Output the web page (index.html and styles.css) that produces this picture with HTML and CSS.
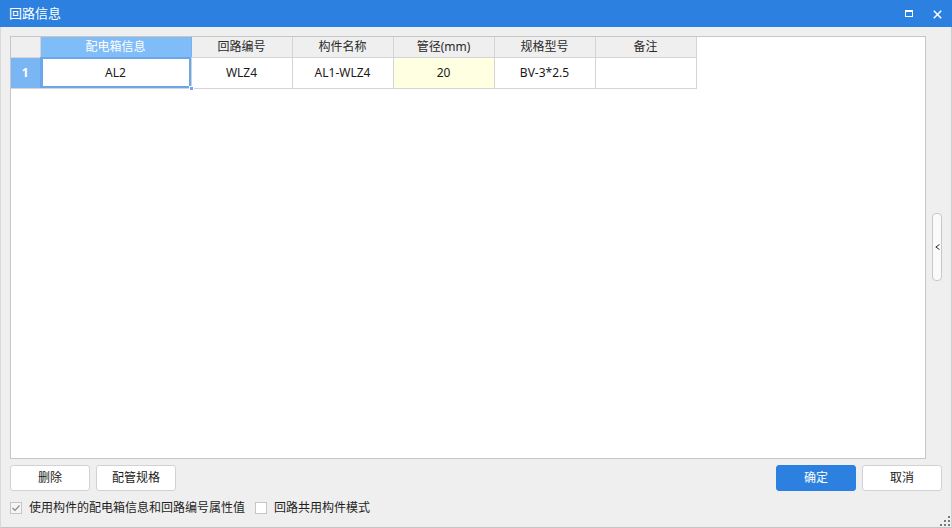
FILE: index.html
```html
<!DOCTYPE html>
<html lang="zh">
<head>
<meta charset="utf-8">
<title>回路信息</title>
<link rel="stylesheet" href="styles.css">
</head>
<body>
<div class="window">
  <div class="titlebar">
    <span class="title">回路信息</span>
    <div class="controls">
      <svg class="ctl" width="8" height="7" viewBox="0 0 8 7"><rect x="0.5" y="0.5" width="7" height="6" fill="none" stroke="#fff" stroke-width="1"/><rect x="0" y="0" width="8" height="2" fill="#fff"/></svg>
      <svg class="ctl close" width="9" height="9" viewBox="0 0 9 9"><path d="M0.8 0.8 L8.2 8.2 M8.2 0.8 L0.8 8.2" stroke="#fff" stroke-width="1.5"/></svg>
    </div>
  </div>
  <div class="content">
    <div class="main-row">
      <div class="panel">
        <table class="grid">
          <colgroup>
            <col class="c-num"><col class="c-wide"><col class="c-std"><col class="c-std"><col class="c-std"><col class="c-std"><col class="c-std">
          </colgroup>
          <thead>
            <tr>
              <th class="corner"></th>
              <th class="sel-head">配电箱信息</th>
              <th>回路编号</th>
              <th>构件名称</th>
              <th>管径(mm)</th>
              <th>规格型号</th>
              <th>备注</th>
            </tr>
          </thead>
          <tbody>
            <tr>
              <td class="rownum">1</td>
              <td class="active">AL2<span class="handle"></span></td>
              <td>WLZ4</td>
              <td>AL1-WLZ4</td>
              <td class="pipe">20</td>
              <td>BV-3*2.5</td>
              <td></td>
            </tr>
          </tbody>
        </table>
      </div>
      <div class="side">
        <div class="tab">
          <svg width="5" height="6" viewBox="0 0 5 6"><path d="M4.5 0.5 L0.8 3 L4.5 5.5" fill="none" stroke="#333" stroke-width="1"/></svg>
        </div>
      </div>
    </div>
    <div class="buttons">
      <div class="left-btns">
        <button class="btn">删除</button>
        <button class="btn">配管规格</button>
      </div>
      <div class="right-btns">
        <button class="btn primary">确定</button>
        <button class="btn">取消</button>
      </div>
    </div>
    <div class="options">
      <label class="opt"><span class="box checked"><svg width="10" height="10" viewBox="0 0 10 10"><path d="M1.5 5 L4 7.5 L8.5 2.5" fill="none" stroke="#8a8a8a" stroke-width="1.2"/></svg></span>使用构件的配电箱信息和回路编号属性值</label>
      <label class="opt"><span class="box"></span>回路共用构件模式</label>
    </div>
  </div>
  <svg class="grip" width="10" height="10" viewBox="0 0 10 10"><g fill="#7a7a7a"><rect x="8" y="0" width="2" height="2"/><rect x="4" y="4" width="2" height="2"/><rect x="8" y="4" width="2" height="2"/><rect x="0" y="8" width="2" height="2"/><rect x="4" y="8" width="2" height="2"/><rect x="8" y="8" width="2" height="2"/></g></svg>
</div>
</body>
</html>
```

FILE: styles.css
```css
* { box-sizing: border-box; }
html, body { margin: 0; padding: 0; }
body {
  width: 952px;
  height: 528px;
  font-family: "Noto Sans", "Noto Sans CJK SC", sans-serif;
  font-size: 12px;
  color: #1e1e1e;
  background: #f0f0f0;
  overflow: hidden;
}
.window {
  position: relative;
  width: 952px;
  height: 528px;
  display: flex;
  flex-direction: column;
  background: #efefef;
  border-left: 1px solid #d9d9d9;
  border-right: 1px solid #cfcfcf;
  border-bottom: 1px solid #c4c4c4;
}
.titlebar {
  height: 27px;
  margin: 0 -1px;
  background: #2b80e0;
  color: #fff;
  display: flex;
  align-items: center;
  justify-content: space-between;
  padding: 0 10px 0 9px;
}
.title { font-size: 13px; line-height: 16px; margin-top: -2px; }
.controls { display: flex; align-items: center; gap: 20px; }
.ctl { display: block; }
.close { margin-top: 1px; }

.content {
  flex: 1;
  display: flex;
  flex-direction: column;
  padding: 9px 0 0 9px;
}
.main-row { display: flex; height: 423px; }
.panel {
  width: 916px;
  height: 423px;
  background: #fff;
  border: 1px solid #c6c6c6;
}
.side {
  flex: 1;
  display: flex;
  align-items: center;
  padding-left: 6px;
}
.tab {
  width: 10px;
  height: 68px;
  margin-top: -1px;
  border: 1px solid #c8c8c8;
  border-radius: 4px;
  background: #fafafa;
  display: flex;
  align-items: center;
  justify-content: center;
}
.tab svg { display: block; margin-left: 1px; }

.grid {
  border-collapse: collapse;
  table-layout: fixed;
  width: 685px;
}
.c-num { width: 29px; }
.c-wide { width: 151px; }
.c-std { width: 101px; }
.grid th, .grid td {
  padding: 0;
  text-align: center;
  border-right: 1px solid #d4d4d4;
  border-bottom: 1px solid #d4d4d4;
  white-space: nowrap;
}
.grid th {
  height: 20px;
  background: #efefef;
  font-weight: normal;
  color: #2a2a2a;
  line-height: 18px;
}
.grid th.sel-head {
  background: #80bcf8;
  color: #fff;
  border-right-color: #79b3ee;
}
.grid td {
  height: 31px;
  line-height: 18px;
  color: #1a1a1a;
}
.grid td.rownum {
  background: #7ab6f4;
  color: #fff;
  font-weight: bold;
  border-right-color: #6aa6e6;
}
.grid td.active {
  position: relative;
  outline: 2px solid #6aa7ea;
  outline-offset: -2px;
  box-shadow: inset 2px 0 0 #6aa7ea;
}
.handle {
  position: absolute;
  right: -3px;
  bottom: -3px;
  width: 5px;
  height: 5px;
  background: #6aa7ea;
  border: 1px solid #fff;
}
.grid td.pipe { background: #ffffe1; }

.buttons {
  display: flex;
  justify-content: space-between;
  margin-top: 6px;
  padding-right: 9px;
  height: 26px;
}
.left-btns, .right-btns { display: flex; gap: 6px; }
.btn {
  width: 80px;
  height: 26px;
  border: 1px solid #d2d2d2;
  border-radius: 3px;
  background: #fff;
  font-family: "Noto Sans", "Noto Sans CJK SC", sans-serif;
  font-size: 12px;
  color: #1a1a1a;
  padding: 0;
  line-height: 18px;
}
.btn.primary {
  background: #2b80e0;
  border-color: #2b80e0;
  color: #fff;
}
.options {
  display: flex;
  align-items: center;
  gap: 10px;
  margin-top: 10px;
  height: 14px;
}
.opt {
  display: flex;
  align-items: center;
  color: #1e1e1e;
  line-height: 14px;
}
.box {
  width: 12px;
  height: 12px;
  border: 1px solid #c6c6c6;
  background: #fff;
  margin-right: 7px;
  display: flex;
  align-items: center;
  justify-content: center;
}
.box svg { display: block; }
.box.checked { background: #f5f5f5; }
.grip {
  position: absolute;
  right: 1px;
  bottom: 1px;
  display: block;
}
```
